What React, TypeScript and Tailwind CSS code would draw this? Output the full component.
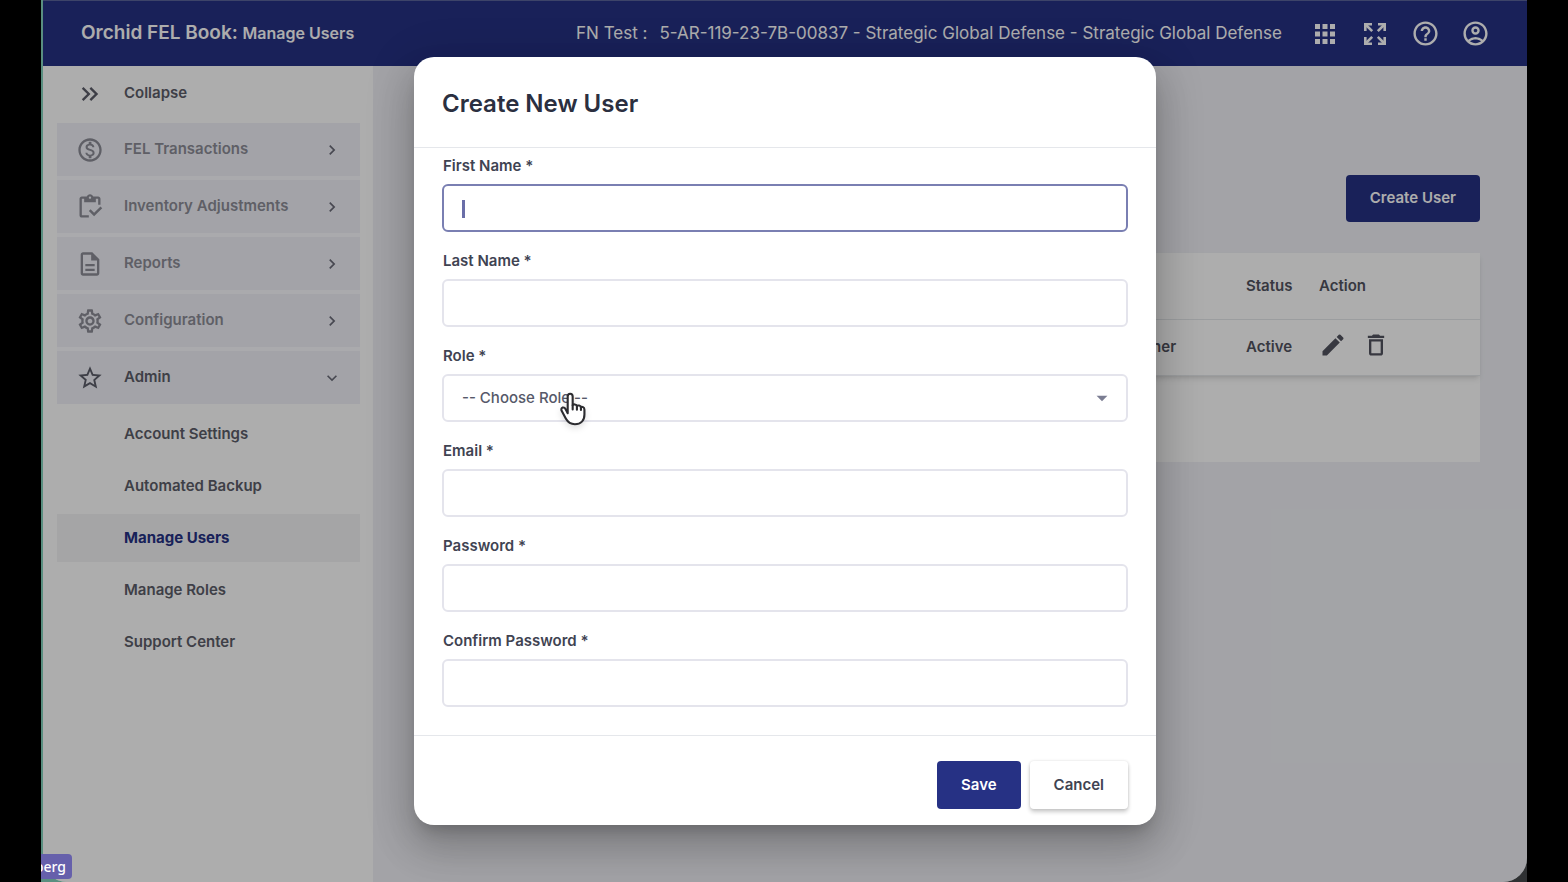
import type { ReactNode } from "react";
import type { IconType } from "react-icons";
import {
  MdApps,
  MdArrowDropDown,
  MdChevronRight,
  MdDeleteOutline,
  MdEdit,
  MdExpandMore,
  MdHelpOutline,
  MdKeyboardDoubleArrowRight,
  MdOutlineAccountCircle,
  MdOutlineDescription,
  MdOutlineInventory,
  MdOutlineMonetizationOn,
  MdOutlineSettings,
  MdStarBorder,
} from "react-icons/md";

const sections: { label: string; icon: IconType }[] = [
  { label: "FEL Transactions", icon: MdOutlineMonetizationOn },
  { label: "Inventory Adjustments", icon: MdOutlineInventory },
  { label: "Reports", icon: MdOutlineDescription },
  { label: "Configuration", icon: MdOutlineSettings },
  { label: "Admin", icon: MdStarBorder },
];

const adminLinks = [
  "Account Settings",
  "Automated Backup",
  "Manage Users",
  "Manage Roles",
  "Support Center",
];

function ExpandIcon() {
  return (
    <svg viewBox="0 0 24 24" className="h-6 w-6" fill="none" stroke="currentColor" strokeWidth="2.6">
      <path d="M2.3 9V2.3H9M15 2.3h6.7V9M21.7 15v6.7H15M9 21.7H2.3V15" />
      <path d="M2.5 2.5l6.7 6.7M21.5 2.5l-6.7 6.7M21.5 21.5l-6.7-6.7M2.5 21.5l6.7-6.7" />
    </svg>
  );
}

function HandCursor() {
  return (
    <svg
      viewBox="0 0 26 34"
      className="pointer-events-none absolute top-[17px] left-[117px] h-[36px] w-[28px] drop-shadow-md"
      fill="#fff"
      stroke="#2c2c30"
      strokeWidth="2"
      strokeLinejoin="round"
      strokeLinecap="round"
    >
      <path d="M8 21V5.2C8 3.6 9 2.6 10.3 2.6s2.4 1 2.4 2.6v8.2c.3-1 3.8-1.1 4 .8.7-1 3.6-.6 3.8 1.2.9-.8 3.3-.3 3.3 2.2v4.6c0 5.6-3.4 9.2-9 9.2-4.6 0-6.7-2-8.6-5.4L2.4 19c-.8-1.6-.4-2.9.6-3.3 1.2-.4 2.4.3 3.2 1.7L8 21z" />
      <path d="M12.7 13.4v4M16.7 14.2v3.4M20.5 15.4v2.6" />
    </svg>
  );
}

function TopBar() {
  return (
    <header className="flex h-[66px] shrink-0 items-center justify-between border-t border-[#5b659b] bg-[#263184] pr-[37px] pl-[38px] text-white">
      <h1 className="text-[19px] font-semibold">
        Orchid FEL Book: <span className="text-base">Manage Users</span>
      </h1>
      <div className="flex items-center">
        <p className="mr-7 flex gap-3 text-[17px]">
          <span>FN Test :</span>
          <span>5-AR-119-23-7B-00837 - Strategic Global Defense - Strategic Global Defense</span>
        </p>
        <div className="flex items-center gap-5">
          <button aria-label="Apps" className="grid size-[30px] place-items-center">
            <MdApps size={30} />
          </button>
          <button aria-label="Full screen" className="grid size-[30px] place-items-center">
            <ExpandIcon />
          </button>
          <button aria-label="Help" className="grid size-[30px] place-items-center">
            <MdHelpOutline size={29} />
          </button>
          <button aria-label="Account" className="grid size-[30px] place-items-center">
            <MdOutlineAccountCircle size={29} />
          </button>
        </div>
      </div>
    </header>
  );
}

function Sidebar() {
  return (
    <nav className="w-[330px] shrink-0 bg-white pr-[13px] pl-3.5 text-[15px] font-semibold text-[#5c5d69]">
      <button className="flex h-[57px] w-full items-center gap-5 pb-0.5 pl-[19px]">
        <MdKeyboardDoubleArrowRight size={28} />
        Collapse
      </button>
      <div className="flex flex-col gap-1 bg-[#fbfbff]">
        {sections.map(({ label, icon: Icon }) => {
          const open = label === "Admin";
          return (
            <button
              key={label}
              className={`flex h-[53px] items-center gap-5 bg-[#f0f1f8] pr-[18px] pl-[19px] ${
                open ? "text-[#5c5d69]" : "text-[#8c8d97]"
              }`}
            >
              <Icon size={28} />
              <span className="flex-1 text-left">{label}</span>
              {open ? (
                <MdExpandMore size={20} className="text-[#6a6b78]" />
              ) : (
                <MdChevronRight size={20} className="text-[#6a6b78]" />
              )}
            </button>
          );
        })}
      </div>
      <ul className="mt-1.5 flex flex-col gap-1">
        {adminLinks.map((label) => (
          <li key={label}>
            <a
              href="#"
              className={`flex h-12 items-center pl-[67px] ${
                label === "Manage Users" ? "bg-[#f3f3f5] font-bold text-[#263184]" : ""
              }`}
            >
              {label}
            </a>
          </li>
        ))}
      </ul>
    </nav>
  );
}

function UsersPage() {
  return (
    <main className="flex-1 bg-[#f0f1f6] pt-[109px] pr-[47px] pl-[47px]">
      <div className="flex justify-end">
        <button className="h-[47px] rounded bg-[#263184] px-6 text-[15px] font-semibold text-white">
          Create User
        </button>
      </div>
      <div className="mt-[31px] bg-white pb-[86px]">
        <table className="w-full table-fixed text-left text-[15px] font-semibold text-[#52535f] shadow-md">
          <colgroup>
            <col />
            <col className="w-[118px]" />
            <col className="w-[73px]" />
            <col className="w-[161px]" />
          </colgroup>
          <thead>
            <tr className="h-[66px] border-b border-gray-200">
              <td />
              <td />
              <th className="font-semibold">Status</th>
              <th className="font-semibold">Action</th>
            </tr>
          </thead>
          <tbody>
            <tr className="h-[56px] border-b border-gray-200">
              <td />
              <td>Owner</td>
              <td>Active</td>
              <td>
                <div className="flex gap-[15px] pb-1">
                  <button aria-label="Edit user">
                    <MdEdit size={28} />
                  </button>
                  <button aria-label="Delete user">
                    <MdDeleteOutline size={28} />
                  </button>
                </div>
              </td>
            </tr>
          </tbody>
        </table>
      </div>
    </main>
  );
}

function Field({ id, label, children }: { id: string; label: string; children: ReactNode }) {
  return (
    <div>
      <label htmlFor={id} className="mb-1.5 block pl-px text-[15px] leading-6 font-semibold">
        {label} *
      </label>
      <div className="relative">{children}</div>
    </div>
  );
}

const control =
  "block h-12 w-full rounded-md border-2 bg-white px-[18px] text-[15px] font-medium outline-none";

function CreateUserDialog() {
  return (
    <div
      role="dialog"
      aria-modal="true"
      aria-labelledby="dialog-title"
      className="w-[50%] min-w-[480px] rounded-[20px] bg-white text-[#404352] shadow-[0_11px_15px_-7px_rgba(0,0,0,0.2),0_24px_38px_3px_rgba(0,0,0,0.14),0_9px_46px_8px_rgba(0,0,0,0.12)]"
    >
      <div className="flex h-[91px] items-center border-b border-gray-200 px-7 pt-1">
        <h2 id="dialog-title" className="text-2xl font-semibold text-[#2b2f40]">
          Create New User
        </h2>
      </div>
      <form id="create-user" className="flex flex-col gap-[17px] px-7 pt-1.5 pb-7">
        <Field id="first-name" label="First Name">
          <input id="first-name" type="text" className={`${control} border-[#7a7fb2]`} />
          <span className="absolute top-4 left-5 h-[18px] w-[3px] bg-[#6a6ea8]" />
        </Field>
        <Field id="last-name" label="Last Name">
          <input id="last-name" type="text" className={`${control} border-[#e4e4ec]`} />
        </Field>
        <Field id="role" label="Role">
          <select id="role" className={`${control} appearance-none border-[#e4e4ec] text-[#565969]`}>
            <option>-- Choose Role --</option>
          </select>
          <MdArrowDropDown
            size={26}
            className="pointer-events-none absolute top-[11px] right-[13px] text-[#7b7d92]"
          />
          <HandCursor />
        </Field>
        <Field id="email" label="Email">
          <input id="email" type="email" className={`${control} border-[#e4e4ec]`} />
        </Field>
        <Field id="password" label="Password">
          <input id="password" type="password" className={`${control} border-[#e4e4ec]`} />
        </Field>
        <Field id="confirm-password" label="Confirm Password">
          <input id="confirm-password" type="password" className={`${control} border-[#e4e4ec]`} />
        </Field>
      </form>
      <div className="flex justify-end gap-[9px] border-t border-gray-200 px-7 pt-[25px] pb-4 text-[15px] font-semibold">
        <button form="create-user" className="h-12 rounded bg-[#263184] px-6 text-white">
          Save
        </button>
        <button className="h-12 rounded bg-white px-6 shadow-[0_3px_4px_rgba(0,0,0,0.2),0_0_3px_rgba(0,0,0,0.12)]">
          Cancel
        </button>
      </div>
    </div>
  );
}

export default function App() {
  return (
    <div className="flex min-h-screen bg-black px-[41px] font-['Inter',sans-serif]">
      <div className="relative flex flex-1 bg-linear-to-r from-[#5a8f80] from-20% to-[#2f3133] to-60% pl-0.5">
        <div className="relative flex flex-1 flex-col overflow-hidden rounded-b-3xl">
          <TopBar />
          <div className="flex flex-1">
            <Sidebar />
            <UsersPage />
          </div>
          <div className="absolute inset-0 grid place-items-center bg-black/32">
            <CreateUserDialog />
          </div>
        </div>
        <div className="absolute bottom-[3px] left-0 flex h-[25px] w-[31px] items-center justify-end overflow-hidden rounded-r bg-[#6660ab] pr-1.5 font-['Noto_Sans',sans-serif] text-sm font-medium text-white">
          berg
        </div>
      </div>
    </div>
  );
}
